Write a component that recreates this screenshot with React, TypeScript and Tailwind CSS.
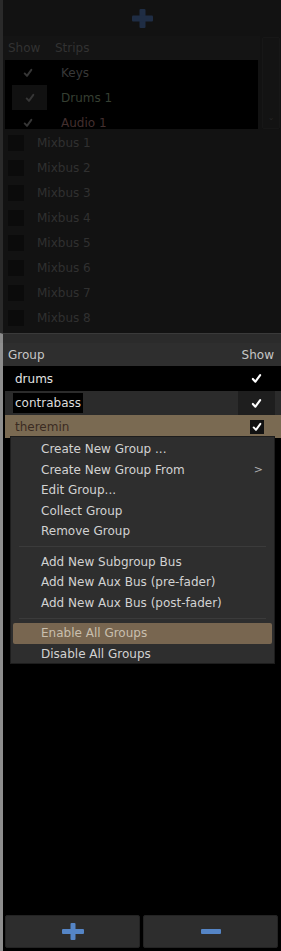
import React from 'react'

const mixbuses = [1, 2, 3, 4, 5, 6, 7, 8]

function Check({ color = '#ffffff', size = 11 }: { color?: string; size?: number }) {
  return (
    <svg width={size} height={size} viewBox="0 0 12 12" fill="none">
      <path d="M2 6.5L4.8 9.5L10 2.2" stroke={color} strokeWidth="2.3" strokeLinecap="round" strokeLinejoin="round" />
    </svg>
  )
}

function Plus({ color, w, h, t }: { color: string; w: number; h: number; t: number }) {
  return (
    <svg width={w} height={h} viewBox={`0 0 ${w} ${h}`}>
      <rect x={(w - t) / 2} y={0} width={t} height={h} rx={1} fill={color} />
      <rect x={0} y={(h - t) / 2} width={w} height={t} rx={1} fill={color} />
    </svg>
  )
}

function MenuItem({ label, arrow = false, active = false }: { label: string; arrow?: boolean; active?: boolean }) {
  return (
    <div
      className={`h-[20.5px] flex items-center pl-[28px] pr-[9px] mx-[2px] rounded-[2px] ${
        active ? 'bg-[#786650]' : ''
      }`}
    >
      <span className={`flex-1 ${active ? 'text-[#c9bfae]' : 'text-[#d2d2d2]'}`}>{label}</span>
      {arrow && <span className="text-[#b0b0b0] text-[11px]">&gt;</span>}
    </div>
  )
}

function Separator() {
  return (
    <div className="h-[10px] flex items-center px-[8px]">
      <div className="h-px w-full bg-[#3b3b3b]" />
    </div>
  )
}

export default function App() {
  return (
    <div className="w-[281px] h-[951px] bg-black flex flex-col font-['DejaVu_Sans',sans-serif] text-[12px] relative overflow-hidden">
      {/* strips pane (insensitive while menu is up) */}
      <div className="h-[333px] flex flex-col bg-[#121212] border-l-[3px] border-[#2a2a2a]">
        <div className="h-[36px] flex items-center justify-center">
          <Plus color="#1f2d44" w={21} h={19} t={6} />
        </div>
        <div className="h-[94px] flex">
          <div className="flex-1 flex flex-col">
            <div className="h-[24px] flex items-center text-[#323232] bg-[#141414]">
              <span className="w-[52px] pl-[5px]">Show</span>
              <span>Strips</span>
            </div>
            <div className="ml-[2px] mr-[2px] h-[69px] bg-black overflow-hidden">
              <div className="h-[25px] flex items-center">
                <div className="w-[37px] flex justify-end pr-[9px]"><Check color="#363636" size={10} /></div>
                <span className="pl-[19px] text-[#383838]">Keys</span>
              </div>
              <div className="h-[25px] flex items-center">
                <div className="w-[35px] ml-[7px] h-full flex items-center justify-center bg-[#111111]"><Check color="#363636" size={10} /></div>
                <span className="pl-[14px] text-[#363f32]">Drums 1</span>
              </div>
              <div className="h-[25px] flex items-center">
                <div className="w-[37px] flex justify-end pr-[9px]"><Check color="#363636" size={10} /></div>
                <span className="pl-[19px] text-[#432f2f]">Audio 1</span>
              </div>
            </div>
          </div>
          <div className="w-[18px] ml-[2px] mr-[1px] mt-[1px] h-[92px] bg-[#131313] border border-[#171717] rounded-[2px] flex flex-col justify-end items-center pb-[4px]">
            <span className="text-[#262626] text-[8px]">⌄</span>
          </div>
        </div>
        {mixbuses.map((n) => (
          <div key={n} className="h-[25px] flex items-center">
            <div className="w-[16px] h-[16px] ml-[5px] bg-[#0b0b0b]" />
            <span className="pl-[13px] text-[#303030]">Mixbus {n}</span>
          </div>
        ))}
      </div>

      {/* pane divider */}
      <div className="h-[10px] bg-[#2b2b2b] border-l-[3px] border-[#8a8a8a] border-t border-t-[#3a3a3a]" />

      {/* groups */}
      <div className="flex-1 flex flex-col border-l-[3px] border-[#8e8e8e]">
        <div className="h-[23px] flex items-center justify-between bg-[#2e2e2e] text-[#c6c6c6] pl-[5px] pr-[7px]">
          <span>Group</span>
          <span>Show</span>
        </div>
        <div className="h-[25px] flex items-center bg-black ml-[2px]">
          <span className="flex-1 pl-[10px] text-[#e2e2e2]">drums</span>
          <div className="w-[37px] mr-[6px] flex justify-center"><Check /></div>
        </div>
        <div className="h-[24px] flex items-center bg-[#2b2b2b] ml-[2px]">
          <div className="flex-1 pl-[8px]">
            <span className="bg-black px-[2px] py-[3px] text-[#dcdcdc]">contrabass</span>
          </div>
          <div className="w-[37px] h-full mr-[6px] flex justify-center items-center bg-[#1e1e1e]"><Check /></div>
        </div>
        <div className="h-[23px] flex items-center bg-[#7a6a52] ml-[2px]">
          <span className="flex-1 pl-[10px] text-[#3a2b22]">theremin</span>
          <div className="w-[37px] mr-[6px] flex justify-center">
            <div className="w-[14px] h-[14px] bg-[#111111] flex items-center justify-center"><Check size={10} /></div>
          </div>
        </div>
        <div className="flex-1" />
        <div className="h-[36px] flex gap-[3px] pl-[2px] pr-[3px] pb-[3px]">
          <div className="flex-1 bg-[#2d2d2d] border border-[#232323] rounded-[2px] flex items-center justify-center">
            <Plus color="#5585c6" w={22} h={17} t={5} />
          </div>
          <div className="flex-1 bg-[#2d2d2d] border border-[#232323] rounded-[2px] flex items-center justify-center">
            <div className="w-[20px] h-[5px] rounded-[1px] bg-[#5585c6]" />
          </div>
        </div>
      </div>

      {/* context menu */}
      <div className="absolute left-[10px] top-[436px] w-[265px] h-[228px] bg-[#2e2e2e] border border-[#1d1d1d] pt-[2px]">
        <MenuItem label="Create New Group ..." />
        <MenuItem label="Create New Group From" arrow />
        <MenuItem label="Edit Group..." />
        <MenuItem label="Collect Group" />
        <MenuItem label="Remove Group" />
        <Separator />
        <MenuItem label="Add New Subgroup Bus" />
        <MenuItem label="Add New Aux Bus (pre-fader)" />
        <MenuItem label="Add New Aux Bus (post-fader)" />
        <Separator />
        <MenuItem label="Enable All Groups" active />
        <MenuItem label="Disable All Groups" />
      </div>
    </div>
  )
}
